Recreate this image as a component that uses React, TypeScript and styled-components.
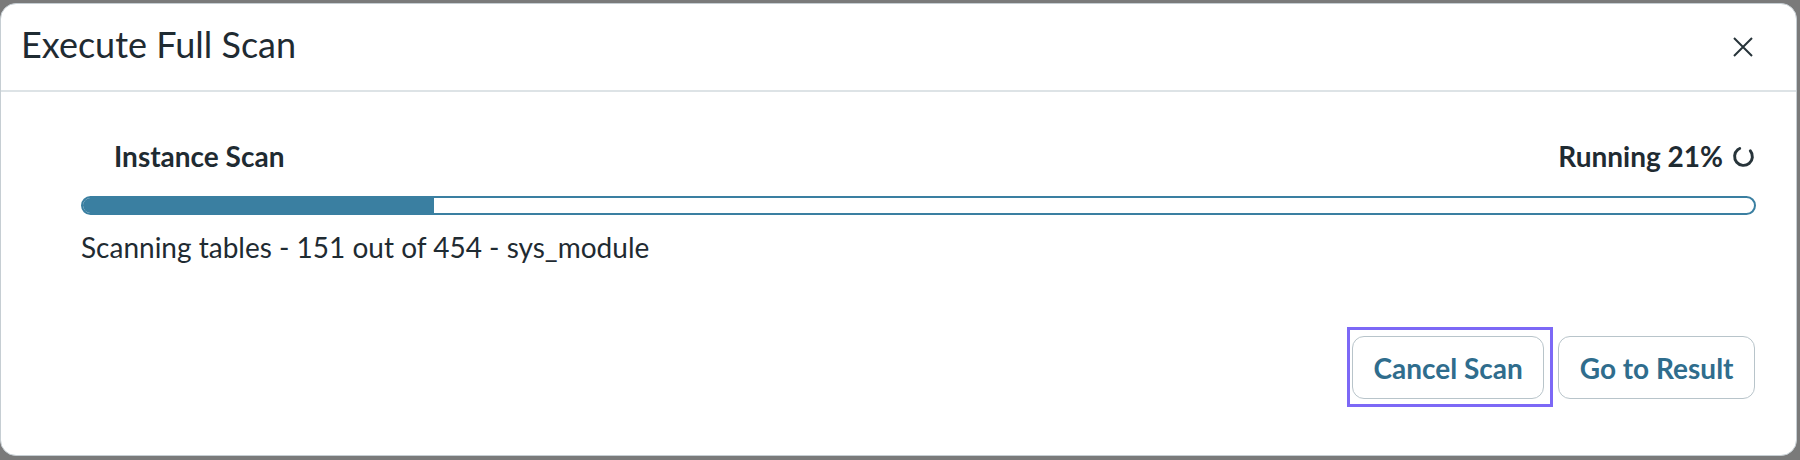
import styled, { createGlobalStyle } from "styled-components";

const progress = 21;

const GlobalStyle = createGlobalStyle`
  html, body {
    margin: 0;
    padding: 0;
  }
  body {
    font-family: Lato, "Noto Sans", sans-serif;
    background: #7a7a7a;
  }
`;

const Page = styled.div`
  height: 460px;
  box-sizing: border-box;
  padding: 3px 3px 4px 0;
  display: flex;
`;

const Modal = styled.section`
  flex: 1;
  display: flex;
  flex-direction: column;
  background: #fff;
  border: 1px solid #c6ced3;
  border-radius: 16px;
  box-sizing: border-box;
  color: #1f2b32;
`;

const Header = styled.header`
  display: flex;
  align-items: center;
  justify-content: space-between;
  height: 86px;
  padding: 0 42px 0 20px;
  border-bottom: 2px solid #dde3e6;
`;

const Title = styled.h2`
  margin: 0 0 4px;
  font-size: 36px;
  font-weight: 400;
  line-height: 1.2;
`;

const CloseButton = styled.button`
  display: flex;
  align-items: center;
  justify-content: center;
  width: 22px;
  height: 22px;
  padding: 0;
  border: 0;
  background: none;
  color: #27343a;
  cursor: pointer;
`;

const Body = styled.div`
  flex: 1;
  display: flex;
  flex-direction: column;
  padding: 48px 40px 0 80px;
`;

const ProgressHead = styled.div`
  display: flex;
  align-items: center;
  justify-content: space-between;
  padding: 0 1px 0 33px;
  font-size: 28px;
  font-weight: 700;
  line-height: 1.2;
`;

const Status = styled.div`
  display: flex;
  align-items: center;
  gap: 9px;
`;

const Spinner = styled.svg`
  width: 23px;
  height: 23px;
  color: #27343a;
`;

const Track = styled.div`
  margin-top: 22px;
  height: 19px;
  box-sizing: border-box;
  border: 2px solid #3a7fa1;
  border-radius: 10px;
  overflow: hidden;
`;

const Fill = styled.div`
  height: 100%;
  background: #3a7fa1;
`;

const Detail = styled.p`
  margin: 16px 0 0;
  font-size: 28px;
  line-height: 1.2;
`;

const Footer = styled.footer`
  display: flex;
  justify-content: flex-end;
  gap: 14px;
  padding: 0 41px 56px;
  margin-top: auto;
`;

const Focus = styled.span`
  position: relative;
  display: flex;

  &::after {
    content: "";
    position: absolute;
    top: -9px;
    left: -5px;
    right: -9px;
    bottom: -8px;
    border: 3px solid #7c68f6;
    pointer-events: none;
  }
`;

const Button = styled.button`
  height: 63px;
  padding: 0 20.5px;
  border: 1.5px solid #b8c4ca;
  border-radius: 12px;
  background: #fff;
  color: #2f6d8d;
  font-family: Lato, "Noto Sans", sans-serif;
  font-size: 28px;
  font-weight: 700;
  cursor: pointer;
`;

export default function App() {
  return (
    <>
      <GlobalStyle />
      <Page>
        <Modal>
          <Header>
            <Title>Execute Full Scan</Title>
            <CloseButton aria-label="Close">
              <svg width="20" height="20" viewBox="0 0 20 20">
                <path
                  d="M1 1 L19 19 M19 1 L1 19"
                  stroke="currentColor"
                  strokeWidth="2"
                />
              </svg>
            </CloseButton>
          </Header>
          <Body>
            <ProgressHead>
              <span>Instance Scan</span>
              <Status>
                <span>Running {progress}%</span>
                <Spinner viewBox="0 0 22 22">
                  <circle
                    cx="11"
                    cy="11"
                    r="8.5"
                    fill="none"
                    stroke="currentColor"
                    strokeWidth="2.8"
                    strokeLinecap="round"
                    strokeDasharray="42 53.4"
                    transform="rotate(-40 11 11)"
                  />
                </Spinner>
              </Status>
            </ProgressHead>
            <Track>
              <Fill style={{ width: `${progress}%` }} />
            </Track>
            <Detail>Scanning tables - 151 out of 454 - sys_module</Detail>
          </Body>
          <Footer>
            <Focus>
              <Button>Cancel Scan</Button>
            </Focus>
            <Button>Go to Result</Button>
          </Footer>
        </Modal>
      </Page>
    </>
  );
}
